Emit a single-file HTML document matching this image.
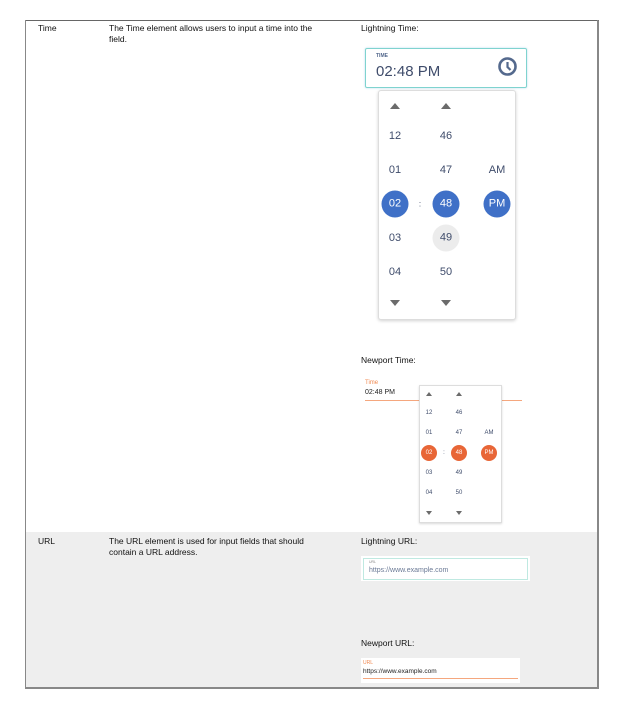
<!DOCTYPE html>
<html><head><style>
body{margin:0;width:627px;height:709px;background:#fff;font-family:"Liberation Sans",sans-serif;position:relative;overflow:hidden}
.a{position:absolute}
.t{font-size:8.5px;color:#111}
.c{position:absolute;transform:translate(-50%,-50%);text-align:center;font-size:11px;color:#3f4c6b}
.circ{border-radius:50%;color:#fff}
.up{position:absolute;width:0;height:0;border-left:5px solid transparent;border-right:5px solid transparent;border-bottom:6px solid #6b6b6b;transform:translate(-50%,-50%)}
.dn{position:absolute;width:0;height:0;border-left:5px solid transparent;border-right:5px solid transparent;border-top:6px solid #6b6b6b;transform:translate(-50%,-50%)}
.up.s{border-left-width:3px;border-right-width:3px;border-bottom-width:4px}
.dn.s{border-left-width:3px;border-right-width:3px;border-top-width:4px}
</style></head><body>
<div class="a" style="left:25px;top:20px;width:572px;height:667px;border:1px solid #888;border-top-color:#666"></div>
<div class="a" style="left:26px;top:532px;width:572px;height:155px;background:#eeeeee"></div>
<div class="a" style="left:25px;top:687px;width:574px;height:2px;background:#888"></div>
<div class="a" style="left:25px;top:20px;width:1px;height:668px;background:#888"></div>
<div class="a" style="left:597px;top:20px;width:1px;height:668px;background:#888"></div>

<div class="a t" style="left:38px;top:23px">Time</div>
<div class="a t" style="left:109px;top:23px;width:222px;line-height:10.5px">The Time element allows users to input a time into the field.</div>
<div class="a t" style="left:361px;top:23px">Lightning Time:</div>

<div class="a" style="left:365px;top:48px;width:160px;height:38px;border:1px solid #7fd3cf;border-radius:2px;box-shadow:0 0 2px #bde"></div>
<div class="a" style="left:376px;top:53px;font-size:5px;color:#54698d;font-weight:bold">TIME</div>
<div class="a" style="left:376px;top:63px;font-size:15px;color:#3f4c6b">02:48 PM</div>
<svg class="a" style="left:497px;top:56px" width="21" height="21" viewBox="0 0 21 21"><circle cx="10.5" cy="10.5" r="8" fill="none" stroke="#54698d" stroke-width="2.6"/><path d="M10.5 6v5l3 3" fill="none" stroke="#54698d" stroke-width="2.2"/></svg>

<div class="a" style="left:378px;top:90px;width:136px;height:228px;border:1px solid #ddd;border-radius:3px;box-shadow:0 1px 3px rgba(0,0,0,.18);background:#fff"></div>
<div class="up" style="left:395px;top:106px"></div>
<div class="up" style="left:446px;top:106px"></div>
<div class="c" style="left:395px;top:136px">12</div><div class="c" style="left:446px;top:136px">46</div>
<div class="c" style="left:395px;top:170px">01</div><div class="c" style="left:446px;top:170px">47</div><div class="c" style="left:497px;top:170px">AM</div>
<div class="c circ" style="left:395px;top:204px;width:27px;height:27px;line-height:27px;background:#3f70c7;color:#fff">02</div>
<div class="c" style="left:420px;top:204px;font-size:8px">:</div>
<div class="c circ" style="left:446px;top:204px;width:27px;height:27px;line-height:27px;background:#3f70c7;color:#fff">48</div>
<div class="c circ" style="left:497px;top:204px;width:27px;height:27px;line-height:27px;background:#3f70c7;color:#fff">PM</div>
<div class="c" style="left:395px;top:238px">03</div>
<div class="c circ" style="left:446px;top:238px;width:27px;height:27px;line-height:27px;background:#ececec;color:#3f4c6b">49</div>
<div class="c" style="left:395px;top:272px">04</div><div class="c" style="left:446px;top:272px">50</div>
<div class="dn" style="left:395px;top:303px"></div>
<div class="dn" style="left:446px;top:303px"></div>

<div class="a t" style="left:361px;top:355px">Newport Time:</div>
<div class="a" style="left:365px;top:380px;font-size:6px;color:#f08a52">Time</div>
<div class="a" style="left:365px;top:389px;font-size:7px;color:#222">02:48 PM</div>
<div class="a" style="left:365px;top:400px;width:157px;height:1px;background:#f5a77e"></div>
<div class="a" style="left:419px;top:385px;width:81px;height:136px;border:1px solid #ddd;box-shadow:0 1px 2px rgba(0,0,0,.15);background:#fff"></div>
<div class="up s" style="left:429px;top:394px"></div><div class="up s" style="left:459px;top:394px"></div>
<div class="c" style="left:429px;top:413px;font-size:6px">12</div><div class="c" style="left:459px;top:413px;font-size:6px">46</div>
<div class="c" style="left:429px;top:433px;font-size:6px">01</div><div class="c" style="left:459px;top:433px;font-size:6px">47</div><div class="c" style="left:489px;top:433px;font-size:6px">AM</div>
<div class="c circ" style="left:429px;top:453px;width:16px;height:16px;line-height:16px;font-size:6px;background:#e86637">02</div>
<div class="c" style="left:444px;top:453px;font-size:6px">:</div>
<div class="c circ" style="left:459px;top:453px;width:16px;height:16px;line-height:16px;font-size:6px;background:#e86637">48</div>
<div class="c circ" style="left:489px;top:453px;width:16px;height:16px;line-height:16px;font-size:6px;background:#e86637">PM</div>
<div class="c" style="left:429px;top:473px;font-size:6px">03</div><div class="c" style="left:459px;top:473px;font-size:6px">49</div>
<div class="c" style="left:429px;top:493px;font-size:6px">04</div><div class="c" style="left:459px;top:493px;font-size:6px">50</div>
<div class="dn s" style="left:429px;top:513px"></div><div class="dn s" style="left:459px;top:513px"></div>

<div class="a t" style="left:38px;top:536px">URL</div>
<div class="a t" style="left:109px;top:536px;width:222px;line-height:10.5px">The URL element is used for input fields that should contain a URL address.</div>
<div class="a t" style="left:361px;top:536px">Lightning URL:</div>
<div class="a" style="left:361px;top:556px;width:169px;height:25px;background:#fff"></div>
<div class="a" style="left:363px;top:558px;width:163px;height:20px;border:1px solid #bfe9e1"></div>
<div class="a" style="left:369px;top:560px;font-size:3.5px;color:#888">URL</div>
<div class="a" style="left:369px;top:567px;font-size:7px;color:#6b7a96">https://www.example.com</div>

<div class="a t" style="left:361px;top:638px">Newport URL:</div>
<div class="a" style="left:361px;top:658px;width:159px;height:25px;background:#fff"></div>
<div class="a" style="left:363px;top:660px;font-size:5px;color:#f08a52">URL</div>
<div class="a" style="left:363px;top:668px;font-size:6.5px;color:#222">https://www.example.com</div>
<div class="a" style="left:363px;top:678px;width:155px;height:1px;background:#f5a77e"></div>
</body></html>
